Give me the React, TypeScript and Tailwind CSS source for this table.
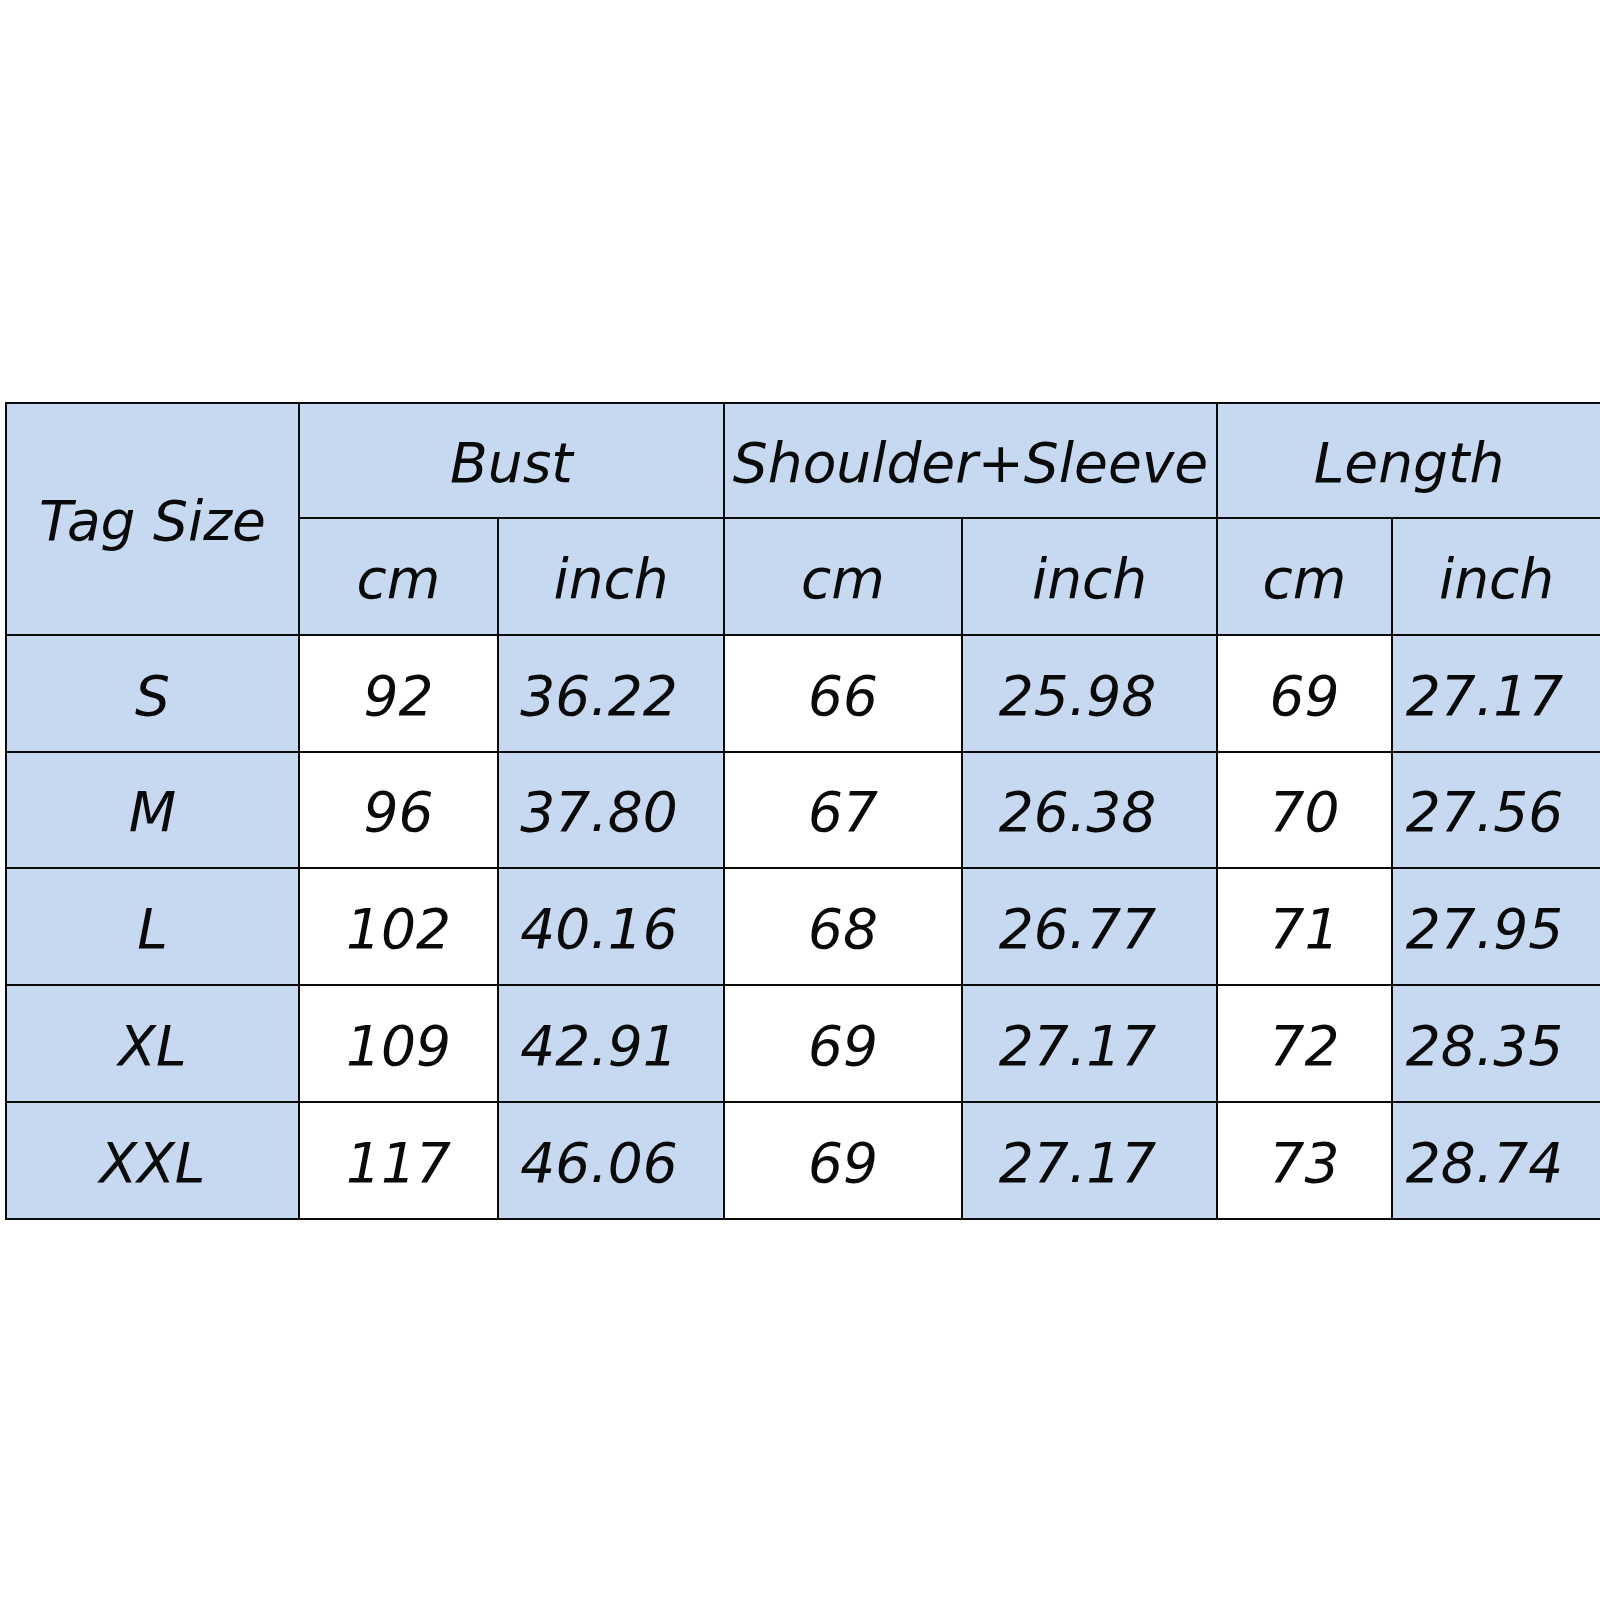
import React from 'react'

const rows = [
  { size: 'S', bust: ['92', '36.22'], sleeve: ['66', '25.98'], length: ['69', '27.17'] },
  { size: 'M', bust: ['96', '37.80'], sleeve: ['67', '26.38'], length: ['70', '27.56'] },
  { size: 'L', bust: ['102', '40.16'], sleeve: ['68', '26.77'], length: ['71', '27.95'] },
  { size: 'XL', bust: ['109', '42.91'], sleeve: ['69', '27.17'], length: ['72', '28.35'] },
  { size: 'XXL', bust: ['117', '46.06'], sleeve: ['69', '27.17'], length: ['73', '28.74'] },
]

const blue = 'bg-[#c6d9f0]'
const cell = 'flex items-center justify-center pt-[5px]'

export default function App() {
  return (
    <div
      className="w-[1600px] h-[1600px] bg-white pt-[402px] pl-[5px] overflow-hidden text-[#0a0a0a] italic text-[55px] leading-none"
      style={{ fontFamily: '"DejaVu Sans", Verdana, sans-serif' }}
    >
      <div className="grid grid-cols-[291px_197px_224px_236px_253px_173px_207px] grid-rows-[113px_115px_115px_114px_115px_115px_115px] gap-[2px] bg-[#0a0a0a] py-[2px] pl-[2px] w-[1595px]">
        <div className={`${blue} ${cell} row-span-2`}>Tag Size</div>
        <div className={`${blue} ${cell} col-span-2`}>Bust</div>
        <div className={`${blue} ${cell} col-span-2`}>Shoulder+Sleeve</div>
        <div className={`${blue} ${cell} col-span-2`}>Length</div>
        <div className={`${blue} ${cell}`}>cm</div>
        <div className={`${blue} ${cell}`}>inch</div>
        <div className={`${blue} ${cell}`}>cm</div>
        <div className={`${blue} ${cell}`}>inch</div>
        <div className={`${blue} ${cell}`}>cm</div>
        <div className={`${blue} ${cell}`}>inch</div>
        {rows.map(r => (
          <React.Fragment key={r.size}>
            <div className={`${blue} ${cell}`}>{r.size}</div>
            <div className={`bg-white ${cell}`}>{r.bust[0]}</div>
            <div className={`${blue} ${cell} pr-6`}>{r.bust[1]}</div>
            <div className={`bg-white ${cell}`}>{r.sleeve[0]}</div>
            <div className={`${blue} ${cell} pr-6`}>{r.sleeve[1]}</div>
            <div className={`bg-white ${cell}`}>{r.length[0]}</div>
            <div className={`${blue} ${cell} pr-6`}>{r.length[1]}</div>
          </React.Fragment>
        ))}
      </div>
    </div>
  )
}
